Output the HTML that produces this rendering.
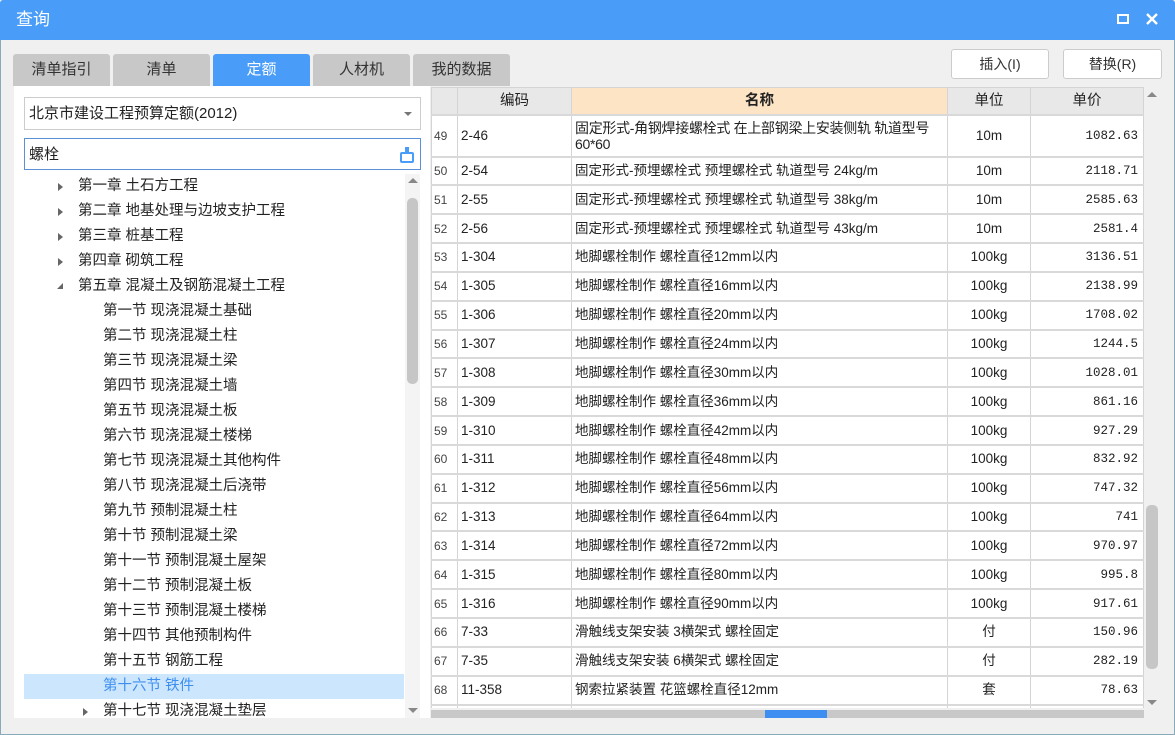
<!DOCTYPE html>
<html><head><meta charset="utf-8"><style>
*{box-sizing:border-box;margin:0;padding:0}
body{width:1175px;height:735px;overflow:hidden;background:#f0f0f0;font-family:"Liberation Sans","Noto Sans CJK SC",sans-serif;position:relative;color:#222}
.abs{position:absolute}
#title{left:0;top:0;width:1175px;height:40px;background:#4a9cf9;color:#fff;font-size:17px;line-height:40px;padding-left:16px;border-radius:3px 3px 0 0}
.win{left:0;top:40px;width:1175px;height:695px;border:1px solid #8ab;border-top:none}
.tab{top:54px;height:32px;width:97px;background:#c8c8c8;border-radius:3px 3px 0 0;font-size:15px;text-align:center;line-height:32px;color:#333}
.btn{top:49px;height:30px;background:#fff;border:1px solid #ccc;border-radius:3px;font-size:14px;text-align:center;line-height:28px;color:#333}
#left{left:14px;top:86px;width:416px;height:632px;background:#fff}
.box{left:24px;width:397px;height:33px;border:1px solid #ccc;font-size:15px;line-height:31px;padding-left:4px;background:#fff}
.tr{position:absolute;left:24px;width:380px;height:25px;font-size:14.5px;line-height:25px;color:#222}
.tri{position:absolute;width:0;height:0;border-top:4px solid transparent;border-bottom:4px solid transparent;border-left:5px solid #666;top:9px}
#grid{left:431px;top:87px;width:713px;height:621px;background:#fff;overflow:hidden}
table{border-collapse:collapse;table-layout:fixed;font-family:"Liberation Sans","Noto Sans CJK SC",sans-serif;font-size:13.5px}
tr{height:28.85px}
td,th{border:1px solid #d4d4d4;border-bottom:2px solid #d9d9d9;overflow:hidden;white-space:nowrap;padding:0 3px;line-height:16px;vertical-align:middle}
th{background:#e8e8e8;font-weight:normal;font-size:14.5px;color:#222}
th.n{background:#fce4c4;font-weight:bold}
td.r{font-size:12px;color:#444;padding:0 2px}
td.c{text-align:center}
td.p{text-align:right;padding-right:5px;font-family:"Liberation Mono","Noto Sans CJK SC",monospace;font-size:12.5px}
</style></head><body>
<div class="abs win"></div>
<div class="abs" id="title">查询
<svg class="abs" style="left:1117px;top:14px" width="12" height="10"><rect x="1" y="1" width="10" height="8" fill="none" stroke="#fff" stroke-width="2"/></svg>
<svg class="abs" style="left:1146px;top:13px" width="12" height="12"><path d="M1 1L11 11M11 1L1 11" stroke="#fff" stroke-width="2.4"/></svg>
</div>
<div class="abs tab" style="left:13px">清单指引</div>
<div class="abs tab" style="left:113px">清单</div>
<div class="abs tab" style="left:213px;background:#4a9cf9;color:#fff">定额</div>
<div class="abs tab" style="left:313px">人材机</div>
<div class="abs tab" style="left:413px">我的数据</div>
<div class="abs btn" style="left:951px;width:98px">插入(I)</div>
<div class="abs btn" style="left:1063px;width:99px">替换(R)</div>
<div class="abs" id="left"></div>
<div class="abs box" style="top:97px">北京市建设工程预算定额(2012)<span class="abs" style="right:8px;top:14px;border-left:4px solid transparent;border-right:4px solid transparent;border-top:4px solid #777"></span></div>
<div class="abs box" style="top:138px;height:32px;border-color:#5b8fd6">螺栓
<svg class="abs" style="right:6px;top:8px" width="14" height="16"><rect x="5" y="0" width="4" height="6" fill="#4a9cf9"/><rect x="1" y="6" width="12" height="9" rx="1" fill="none" stroke="#4a9cf9" stroke-width="2"/></svg></div>
<div class="abs" style="left:405px;top:174px;width:15px;height:544px;background:#f4f4f4"></div>
<div class="abs" style="left:407px;top:198px;width:11px;height:186px;background:#c6c6c6;border-radius:5px"></div>
<div class="abs" style="left:408px;top:178px;border-left:5px solid transparent;border-right:5px solid transparent;border-bottom:5px solid #888"></div>
<div class="abs" style="left:408px;top:708px;border-left:5px solid transparent;border-right:5px solid transparent;border-top:5px solid #888"></div>
<div class="abs" style="left:24px;top:674px;width:380px;height:25px;background:#cce6fd"></div>
<div class="tr" style="top:174px"><i class="tri" style="left:34px"></i><span style="margin-left:54px">第一章 土石方工程</span></div>
<div class="tr" style="top:199px"><i class="tri" style="left:34px"></i><span style="margin-left:54px">第二章 地基处理与边坡支护工程</span></div>
<div class="tr" style="top:224px"><i class="tri" style="left:34px"></i><span style="margin-left:54px">第三章 桩基工程</span></div>
<div class="tr" style="top:249px"><i class="tri" style="left:34px"></i><span style="margin-left:54px">第四章 砌筑工程</span></div>
<div class="tr" style="top:274px"><span class="abs" style="left:33px;top:9px;border-left:6px solid transparent;border-bottom:6px solid #666"></span><span style="margin-left:54px">第五章 混凝土及钢筋混凝土工程</span></div>
<div class="tr" style="top:299px;padding-left:79px">第一节 现浇混凝土基础</div>
<div class="tr" style="top:324px;padding-left:79px">第二节 现浇混凝土柱</div>
<div class="tr" style="top:349px;padding-left:79px">第三节 现浇混凝土梁</div>
<div class="tr" style="top:374px;padding-left:79px">第四节 现浇混凝土墙</div>
<div class="tr" style="top:399px;padding-left:79px">第五节 现浇混凝土板</div>
<div class="tr" style="top:424px;padding-left:79px">第六节 现浇混凝土楼梯</div>
<div class="tr" style="top:449px;padding-left:79px">第七节 现浇混凝土其他构件</div>
<div class="tr" style="top:474px;padding-left:79px">第八节 现浇混凝土后浇带</div>
<div class="tr" style="top:499px;padding-left:79px">第九节 预制混凝土柱</div>
<div class="tr" style="top:524px;padding-left:79px">第十节 预制混凝土梁</div>
<div class="tr" style="top:549px;padding-left:79px">第十一节 预制混凝土屋架</div>
<div class="tr" style="top:574px;padding-left:79px">第十二节 预制混凝土板</div>
<div class="tr" style="top:599px;padding-left:79px">第十三节 预制混凝土楼梯</div>
<div class="tr" style="top:624px;padding-left:79px">第十四节 其他预制构件</div>
<div class="tr" style="top:649px;padding-left:79px">第十五节 钢筋工程</div>
<div class="tr" style="top:674px;padding-left:79px;color:#3d8ef0">第十六节 铁件</div>
<div class="tr" style="top:699px;height:19px;overflow:hidden;padding-left:79px"><i class="tri" style="left:59px"></i>第十七节 现浇混凝土垫层</div>

<div class="abs" id="grid">
<table style="width:712px">
<colgroup><col style="width:26px"><col style="width:114px"><col style="width:376px"><col style="width:83px"><col style="width:113px"></colgroup>
<tr style="height:27px"><th></th><th>编码</th><th class="n">名称</th><th>单位</th><th>单价</th></tr>
<tr style="height:42px"><td class="r">49</td><td>2-46</td><td style="white-space:normal;font-size:14px;letter-spacing:-0.3px">固定形式-角钢焊接螺栓式 在上部钢梁上安装侧轨 轨道型号 60*60</td><td class="c">10m</td><td class="p">1082.63</td></tr>
<tr><td class="r">50</td><td>2-54</td><td>固定形式-预埋螺栓式 预埋螺栓式 轨道型号 24kg/m</td><td class="c">10m</td><td class="p">2118.71</td></tr>
<tr><td class="r">51</td><td>2-55</td><td>固定形式-预埋螺栓式 预埋螺栓式 轨道型号 38kg/m</td><td class="c">10m</td><td class="p">2585.63</td></tr>
<tr><td class="r">52</td><td>2-56</td><td>固定形式-预埋螺栓式 预埋螺栓式 轨道型号 43kg/m</td><td class="c">10m</td><td class="p">2581.4</td></tr>
<tr><td class="r">53</td><td>1-304</td><td>地脚螺栓制作 螺栓直径12mm以内</td><td class="c">100kg</td><td class="p">3136.51</td></tr>
<tr><td class="r">54</td><td>1-305</td><td>地脚螺栓制作 螺栓直径16mm以内</td><td class="c">100kg</td><td class="p">2138.99</td></tr>
<tr><td class="r">55</td><td>1-306</td><td>地脚螺栓制作 螺栓直径20mm以内</td><td class="c">100kg</td><td class="p">1708.02</td></tr>
<tr><td class="r">56</td><td>1-307</td><td>地脚螺栓制作 螺栓直径24mm以内</td><td class="c">100kg</td><td class="p">1244.5</td></tr>
<tr><td class="r">57</td><td>1-308</td><td>地脚螺栓制作 螺栓直径30mm以内</td><td class="c">100kg</td><td class="p">1028.01</td></tr>
<tr><td class="r">58</td><td>1-309</td><td>地脚螺栓制作 螺栓直径36mm以内</td><td class="c">100kg</td><td class="p">861.16</td></tr>
<tr><td class="r">59</td><td>1-310</td><td>地脚螺栓制作 螺栓直径42mm以内</td><td class="c">100kg</td><td class="p">927.29</td></tr>
<tr><td class="r">60</td><td>1-311</td><td>地脚螺栓制作 螺栓直径48mm以内</td><td class="c">100kg</td><td class="p">832.92</td></tr>
<tr><td class="r">61</td><td>1-312</td><td>地脚螺栓制作 螺栓直径56mm以内</td><td class="c">100kg</td><td class="p">747.32</td></tr>
<tr><td class="r">62</td><td>1-313</td><td>地脚螺栓制作 螺栓直径64mm以内</td><td class="c">100kg</td><td class="p">741</td></tr>
<tr><td class="r">63</td><td>1-314</td><td>地脚螺栓制作 螺栓直径72mm以内</td><td class="c">100kg</td><td class="p">970.97</td></tr>
<tr><td class="r">64</td><td>1-315</td><td>地脚螺栓制作 螺栓直径80mm以内</td><td class="c">100kg</td><td class="p">995.8</td></tr>
<tr><td class="r">65</td><td>1-316</td><td>地脚螺栓制作 螺栓直径90mm以内</td><td class="c">100kg</td><td class="p">917.61</td></tr>
<tr><td class="r">66</td><td>7-33</td><td>滑触线支架安装 3横架式 螺栓固定</td><td class="c">付</td><td class="p">150.96</td></tr>
<tr><td class="r">67</td><td>7-35</td><td>滑触线支架安装 6横架式 螺栓固定</td><td class="c">付</td><td class="p">282.19</td></tr>
<tr><td class="r">68</td><td>11-358</td><td>钢索拉紧装置 花篮螺栓直径12mm</td><td class="c">套</td><td class="p">78.63</td></tr>
<tr><td></td><td></td><td></td><td></td><td></td></tr>
</table>
</div>
<div class="abs" style="left:431px;top:710px;width:713px;height:8px;background:#c8c8c8"></div>
<div class="abs" style="left:765px;top:710px;width:62px;height:8px;background:#3d8ef0"></div>
<div class="abs" style="left:1144px;top:87px;width:16px;height:623px;background:#f0f0f0"></div>
<div class="abs" style="left:1146px;top:505px;width:12px;height:164px;background:#c6c6c6;border-radius:5px"></div>
<div class="abs" style="left:1147px;top:92px;border-left:5px solid transparent;border-right:5px solid transparent;border-bottom:5px solid #888"></div>
<div class="abs" style="left:1147px;top:700px;border-left:5px solid transparent;border-right:5px solid transparent;border-top:5px solid #888"></div>
</body></html>
